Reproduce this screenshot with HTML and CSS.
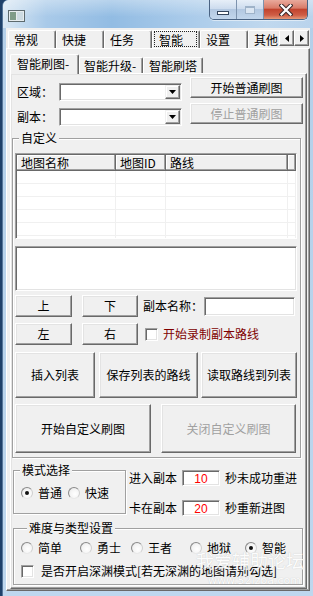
FILE: index.html
```html
<!DOCTYPE html>
<html lang="zh-CN">
<head>
    <meta charset="UTF-8">
    <meta name="viewport" content="width=device-width, initial-scale=1.0">
    <title>智能刷图</title>
    <link rel="stylesheet" href="styles.css">
</head>
<body>
    <div class="window">
        <!-- Title bar -->
        <div class="titlebar">
            <svg class="app-icon" width="17" height="12" viewBox="0 0 17 12">
                <rect x="0.5" y="0.5" width="16" height="11" fill="#e6ecee" stroke="#5d6a6e"/>
                <rect x="2" y="2" width="6" height="8" fill="#7f9c88"/>
                <rect x="9" y="2" width="6" height="8" fill="#cddbe2"/>
            </svg>
            <div class="caption">
                <span class="cap cap-min"><i></i></span>
                <span class="cap cap-max"><i></i></span>
                <span class="cap cap-close">
                    <svg width="14" height="12" viewBox="0 0 14 12">
                        <path d="M2.5 1.5 L11.5 10.5 M11.5 1.5 L2.5 10.5" stroke="#3b2a2a" stroke-width="4.2" stroke-linecap="square"/>
                        <path d="M2.5 1.5 L11.5 10.5 M11.5 1.5 L2.5 10.5" stroke="#fff" stroke-width="2.2" stroke-linecap="square"/>
                    </svg>
                </span>
            </div>
        </div>

        <div class="client">
            <!-- Main tabs -->
            <div class="main-tabs">
                <div class="tab-list">
                    <span class="tab">常规</span>
                    <span class="tab">快捷</span>
                    <span class="tab">任务</span>
                    <span class="tab active"><span class="focus">智能</span></span>
                    <span class="tab">设置</span>
                    <span class="tab">其他</span>
                </div>
                <div class="tab-scroll">
                    <span class="arrow">
                        <svg width="4" height="7" viewBox="0 0 4 7"><path d="M4 0 L0 3.5 L4 7Z" fill="#000"/></svg>
                    </span>
                    <span class="arrow">
                        <svg width="4" height="7" viewBox="0 0 4 7"><path d="M0 0 L4 3.5 L0 7Z" fill="#000"/></svg>
                    </span>
                </div>
            </div>

            <div class="tab-panel">
                <!-- Sub tabs -->
                <div class="sub-tabs">
                    <span class="sub-tab active">智能刷图-</span>
                    <span class="sub-tab">智能升级-</span>
                    <span class="sub-tab">智能刷塔</span>
                </div>

                <div class="sub-panel">
                    <div class="area-row">
                        <label>区域：</label>
                        <div class="combo sunken"><span class="drop"><svg width="7" height="4" viewBox="0 0 7 4"><path d="M0 0 L7 0 L3.5 4Z" fill="#000"/></svg></span></div>
                        <button class="btn">开始普通刷图</button>
                    </div>
                    <div class="area-row">
                        <label>副本：</label>
                        <div class="combo sunken"><span class="drop"><svg width="7" height="4" viewBox="0 0 7 4"><path d="M0 0 L7 0 L3.5 4Z" fill="#000"/></svg></span></div>
                        <button class="btn btn-second" disabled>停止普通刷图</button>
                    </div>

                    <!-- 自定义 -->
                    <div class="group custom-group">
                        <div class="group-title">自定义</div>

                        <div class="listview sunken">
                            <div class="lv-head">
                                <span class="col-name">地图名称</span>
                                <span class="col-id">地图ID</span>
                                <span class="col-route">路线</span>
                                <span class="col-fill"></span>
                            </div>
                            <div class="lv-body">
                                <span class="col-name"></span>
                                <span class="col-id"></span>
                                <span class="col-route"></span>
                                <span class="col-fill"></span>
                            </div>
                        </div>

                        <div class="memo sunken"></div>

                        <div class="ctrl-row">
                            <button class="btn btn-dir">上</button>
                            <button class="btn btn-dir btn-dir-right">下</button>
                            <span class="name-label">副本名称：</span>
                            <div class="name-input sunken"></div>
                        </div>
                        <div class="ctrl-row ctrl-row-second">
                            <button class="btn btn-dir">左</button>
                            <button class="btn btn-dir btn-dir-right">右</button>
                            <span class="checkbox record-box"></span>
                            <span class="record-label">开始录制副本路线</span>
                        </div>

                        <div class="big-row">
                            <button class="btn btn-insert">插入列表</button>
                            <button class="btn btn-save">保存列表的路线</button>
                            <button class="btn btn-load">读取路线到列表</button>
                        </div>
                        <div class="big-row big-row-tall">
                            <button class="btn btn-start">开始自定义刷图</button>
                            <button class="btn btn-stop" disabled>关闭自定义刷图</button>
                        </div>
                    </div>

                    <!-- Mode and timers -->
                    <div class="bottom-row">
                        <div class="group mode-group">
                            <div class="group-title">模式选择</div>
                            <div class="radio-row">
                                <span class="radio checked"></span><span class="opt-text">普通</span>
                                <span class="radio radio-next"></span><span class="opt-text">快速</span>
                            </div>
                        </div>
                        <div class="retry">
                            <div class="retry-row">
                                <span class="retry-label">进入副本</span>
                                <span class="num sunken">10</span>
                                <span class="retry-tail">秒未成功重进</span>
                            </div>
                            <div class="retry-row retry-row-second">
                                <span class="retry-label">卡在副本</span>
                                <span class="num sunken">20</span>
                                <span class="retry-tail">秒重新进图</span>
                            </div>
                        </div>
                    </div>

                    <!-- Difficulty -->
                    <div class="group level-group">
                        <div class="group-title">难度与类型设置</div>
                        <div class="level-row">
                            <span class="opt"><span class="radio"></span><span class="opt-text">简单</span></span>
                            <span class="opt"><span class="radio"></span><span class="opt-text">勇士</span></span>
                            <span class="opt"><span class="radio"></span><span class="opt-text">王者</span></span>
                            <span class="opt"><span class="radio"></span><span class="opt-text">地狱</span></span>
                            <span class="opt"><span class="radio checked"></span><span class="opt-text">智能</span></span>
                        </div>
                        <div class="deep-row">
                            <span class="checkbox"></span>
                            <span class="deep-text">是否开启深渊模式[若无深渊的地图请别勾选]</span>
                        </div>
                    </div>
                </div>
            </div>
        </div>

        <div class="watermark">我爱辅助论坛<small>www.52lzba.com</small></div>
    </div>
</body>
</html>
```

FILE: styles.css
```css
* {
    box-sizing: border-box;
}

body {
    margin: 0;
    width: 313px;
    height: 596px;
    overflow: hidden;
    background: #1f416a;
    font-family: "Noto Sans CJK SC", "Noto Sans", sans-serif;
    font-size: 12px;
    line-height: 12px;
    color: #000;
}

.window {
    position: relative;
    width: 311px;
    height: 596px;
    margin-left: 2px;
    display: flex;
    flex-direction: column;
    background: linear-gradient(to bottom, #b3cfe9 0%, #bed7ee 100%);
    border-left: 1px solid #56769a;
    border-radius: 6px 0 0 0;
}

/* ---------- title bar ---------- */
.titlebar {
    height: 28px;
    flex-shrink: 0;
    display: flex;
    justify-content: space-between;
    align-items: flex-start;
    padding-left: 5px;
    border-radius: 6px 0 0 0;
    background:
        linear-gradient(to bottom, rgba(255, 255, 255, 0.35), rgba(255, 255, 255, 0) 60%),
        linear-gradient(to right, #d9e7f3 0%, #a9cae9 14%, #92bce3 35%, #aacbea 60%, #c0d8ee 85%, #b9d3ec 100%);
}

.app-icon {
    margin-top: 10px;
}

.caption {
    display: flex;
    height: 20px;
    margin-right: 5px;
    border: 1px solid #4a6383;
    border-top: none;
    border-radius: 0 0 5px 5px;
    overflow: hidden;
    box-shadow: 0 1px 0 rgba(255, 255, 255, 0.5);
}

.cap {
    height: 19px;
    display: flex;
    align-items: center;
    justify-content: center;
}

.cap-min,
.cap-max {
    width: 27px;
    background: linear-gradient(to bottom, #e7eff8 0%, #cddcee 45%, #b3c8e1 50%, #c2d6ec 100%);
    border-right: 1px solid #7d93ae;
}

.cap-min i {
    display: block;
    width: 12px;
    height: 4px;
    margin-top: 6px;
    background: #fff;
    border: 1px solid #34455c;
}

.cap-max i {
    display: block;
    width: 10px;
    height: 8px;
    border: 1px solid #9fb3c9;
    border-top-width: 2px;
    background: #dbe6f2;
}

.cap-close {
    width: 43px;
    background: linear-gradient(to bottom, #e9aa9c 0%, #d97c69 42%, #c2442e 50%, #cf5e46 80%, #e59a7a 100%);
}

/* ---------- client ---------- */
.client {
    flex: 1;
    display: flex;
    flex-direction: column;
    margin: 0 3px 5px 3px;
    padding-top: 2px;
    background: #f0f0f0;
}

.main-tabs {
    display: flex;
    height: 18px;
    flex-shrink: 0;
    padding-left: 2px;
}

.tab-list {
    flex: 1;
    display: flex;
    overflow: hidden;
}

.tab,
.sub-tab {
    flex-shrink: 0;
    background: #f0f0f0;
    border: 1px solid;
    border-bottom: none;
    border-color: #fff #696969 #fff #fff;
    border-radius: 2px 2px 0 0;
    box-shadow: inset -1px 0 #a0a0a0;
    white-space: nowrap;
}

.tab {
    width: 48px;
    height: 18px;
    padding: 3px 0 0 5px;
}

.tab.active {
    padding: 0 2px 0 1px;
}

.tab .focus {
    display: block;
    height: 16px;
    padding: 2px 0 0 4px;
    border: 1px dotted #222;
}

.tab-scroll {
    display: flex;
    padding-right: 1px;
}

.arrow {
    width: 15px;
    height: 16px;
    display: flex;
    align-items: center;
    justify-content: center;
    background: #f0f0f0;
    border: 1px solid;
    border-color: #fff #696969 #696969 #fff;
    box-shadow: inset -1px -1px #a0a0a0;
}

.tab-panel {
    flex: 1;
    display: flex;
    flex-direction: column;
    padding: 5px 2px 1px 3px;
    border: 1px solid;
    border-color: #fff #696969 #696969 #fff;
    box-shadow: inset -1px -1px #a0a0a0;
}

.sub-tabs {
    display: flex;
    align-items: flex-end;
    height: 19px;
    flex-shrink: 0;
    position: relative;
    z-index: 1;
}

.sub-tab {
    height: 16px;
    padding: 2px 0 0 4px;
}

.sub-tab:nth-child(2) {
    width: 64px;
}

.sub-tab:nth-child(3) {
    width: 60px;
    padding-left: 5px;
}

.sub-tab.active {
    width: 69px;
    height: 20px;
    margin-bottom: -1px;
    padding: 3px 0 0 6px;
}

.sub-panel {
    flex: 1;
    padding-top: 3px;
    border: 1px solid;
    border-color: #fff #696969 #696969 #fff;
    box-shadow: inset -1px -1px #a0a0a0, inset 1px 1px #e3e3e3;
}

/* ---------- common controls ---------- */
.btn {
    display: flex;
    align-items: center;
    justify-content: center;
    padding: 0;
    font: inherit;
    color: #000;
    background: #f0f0f0;
    border: 1px solid;
    border-color: #fff #696969 #696969 #fff;
    box-shadow: inset -1px -1px #a0a0a0, inset 1px 1px #e3e3e3;
}

.btn:disabled {
    color: #a0a0a0;
}

.sunken {
    background: #fff;
    border: 1px solid;
    border-color: #a0a0a0 #fff #fff #a0a0a0;
    box-shadow: inset 1px 1px #696969, inset -1px -1px #e3e3e3;
}

.checkbox {
    width: 13px;
    height: 13px;
    flex-shrink: 0;
    background: #fff;
    border: 1px solid;
    border-color: #a0a0a0 #fff #fff #a0a0a0;
    box-shadow: inset 1px 1px #696969, inset -1px -1px #e3e3e3;
}

.radio {
    width: 12px;
    height: 12px;
    flex-shrink: 0;
    display: flex;
    align-items: center;
    justify-content: center;
    border-radius: 50%;
    background: radial-gradient(circle at 60% 60%, #fff 0%, #f4f4f4 55%, #d8d8d8 100%);
    border: 1px solid;
    border-color: #8a8a8a #cfcfcf #e8e8e8 #8a8a8a;
}

.radio.checked::after {
    content: "";
    width: 4px;
    height: 4px;
    border-radius: 50%;
    background: #111;
}

.opt-text {
    margin-left: 5px;
}

/* ---------- top area ---------- */
.area-row {
    display: flex;
    align-items: flex-start;
    height: 25px;
    padding-left: 6px;
}

.area-row label {
    width: 42px;
    margin-top: 6px;
    line-height: 18px;
}

.combo {
    width: 123px;
    height: 18px;
    margin-top: 6px;
    padding: 1px;
    display: flex;
    justify-content: flex-end;
}

.combo .drop {
    width: 15px;
    height: 14px;
    display: flex;
    align-items: center;
    justify-content: center;
    background: #f0f0f0;
    border: 1px solid;
    border-color: #f0f0f0 #696969 #696969 #f0f0f0;
    box-shadow: inset -1px -1px #a0a0a0, inset 1px 1px #fff;
}

.area-row .btn {
    width: 113px;
    height: 21px;
    margin-left: 8px;
}

.area-row .btn-second {
    margin-top: 1px;
}

/* ---------- group boxes ---------- */
.group {
    border: 1px solid #a0a0a0;
    box-shadow: inset 1px 1px #fff, 1px 1px #fff;
}

.group-title {
    width: max-content;
    margin: -7px 0 0 6px;
    padding: 0 2px;
    line-height: 12px;
    background: #f0f0f0;
}

.custom-group {
    width: 289px;
    margin: 11px 0 0 1px;
    padding: 0 3px 4px 2px;
}

.custom-group .group-title {
    margin-left: 4px;
}

.listview {
    height: 86px;
    margin-top: 9px;
    display: flex;
    flex-direction: column;
    overflow: hidden;
}

.lv-head,
.lv-body {
    display: flex;
}

.lv-head {
    height: 16px;
    flex-shrink: 0;
    margin: 1px 0 0 1px;
    background: #f0f0f0;
}

.lv-head span {
    padding: 2px 0 0 4px;
    white-space: nowrap;
    border-right: 1px solid #696969;
    border-bottom: 1px solid #696969;
    box-shadow: inset -1px -1px #a0a0a0, inset 1px 1px #fff;
}

.lv-body {
    flex: 1;
    margin-left: 1px;
    background: repeating-linear-gradient(to bottom, #fff 0, #fff 12px, #f0f0f0 12px, #f0f0f0 13px);
}

.lv-body span {
    border-right: 1px solid #f0f0f0;
}

.col-name { width: 99px; }
.col-id { width: 50px; }
.col-route { width: 122px; }
.col-fill { flex: 1; }

.memo {
    height: 45px;
    margin-top: 7px;
}

.ctrl-row {
    display: flex;
    align-items: center;
    height: 22px;
    margin-top: 4px;
}

.ctrl-row-second {
    margin-top: 6px;
}

.btn-dir {
    width: 57px;
    height: 22px;
}

.btn-dir-right {
    width: 56px;
    margin-left: 10px;
}

.name-label {
    margin-left: 5px;
}

.name-input {
    width: 91px;
    height: 19px;
    margin-left: 1px;
}

.record-box {
    margin-left: 7px;
}

.record-label {
    margin-left: 5px;
    color: #800000;
}

.big-row {
    display: flex;
    height: 46px;
    margin-top: 7px;
}

.big-row .btn {
    height: 100%;
}

.btn-insert { width: 80px; }
.btn-save { width: 99px; margin-left: 4px; }
.btn-load { width: 96px; margin-left: 3px; }

.big-row-tall {
    height: 49px;
    margin-top: 6px;
}

.btn-start { width: 136px; }
.btn-stop { width: 135px; margin-left: 10px; }

/* ---------- mode / timers ---------- */
.bottom-row {
    display: flex;
    align-items: flex-start;
    margin-top: 12px;
}

.mode-group {
    width: 113px;
    height: 44px;
    margin-left: 2px;
}

.radio-row {
    display: flex;
    align-items: center;
    height: 14px;
    margin-top: 10px;
    padding-left: 7px;
}

.radio-next {
    margin-left: 6px;
}

.retry {
    margin-left: 3px;
}

.retry-row {
    display: flex;
    align-items: center;
    height: 16px;
}

.retry-row-second {
    margin-top: 14px;
}

.retry-label {
    width: 48px;
}

.num {
    width: 38px;
    height: 16px;
    margin: 0 5px;
    padding-top: 2px;
    text-align: center;
    color: #f00;
    font-family: "Liberation Sans", sans-serif;
}

.level-group {
    width: 290px;
    margin: 12px 0 0 2px;
    padding: 0 0 6px 7px;
}

.level-row {
    display: grid;
    grid-template-columns: 59px 51px 59px 55px auto;
    height: 14px;
    margin-top: 7px;
}

.opt {
    display: flex;
    align-items: center;
}

.deep-row {
    display: flex;
    align-items: center;
    height: 14px;
    margin-top: 9px;
}

.deep-text {
    margin-left: 7px;
    white-space: nowrap;
}

/* ---------- forum watermark ---------- */
.watermark {
    position: absolute;
    left: 193px;
    top: 551px;
    font-size: 18px;
    line-height: 18px;
    color: #fff;
    opacity: 0.85;
    text-shadow: 0 0 1px #b8b8b8;
    pointer-events: none;
}

.watermark small {
    display: block;
    margin: 6px 0 0 12px;
    font-family: "DejaVu Sans", sans-serif;
    font-size: 11px;
    line-height: 11px;
}
```
